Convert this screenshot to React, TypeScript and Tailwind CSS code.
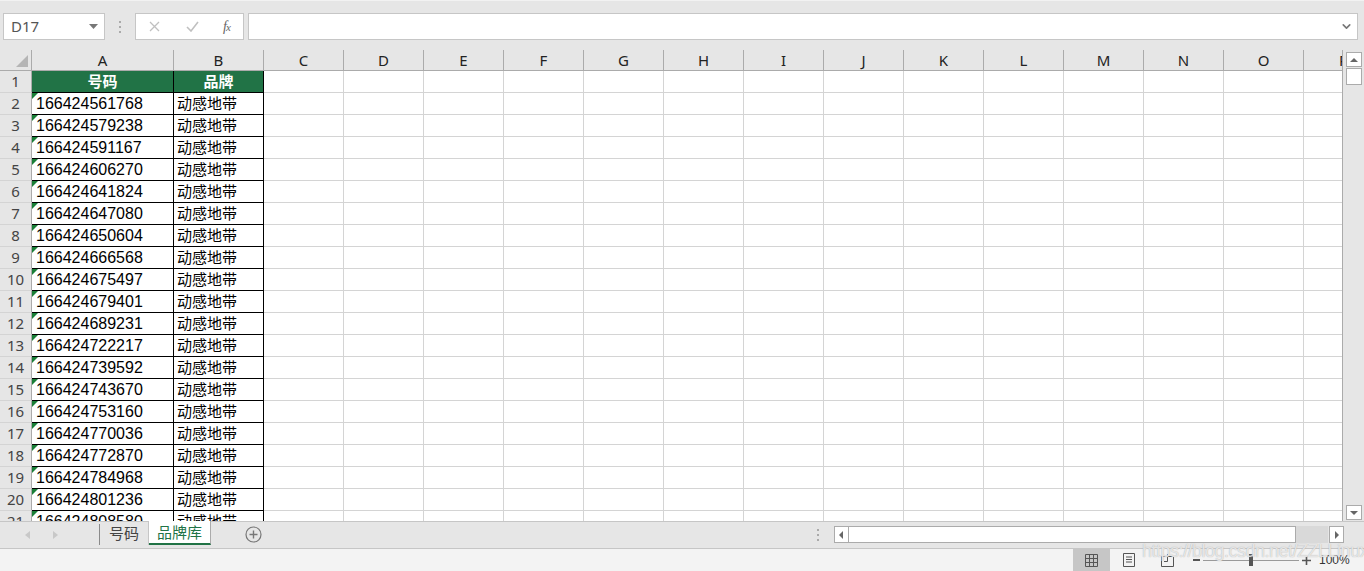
import { ChevronDown } from "lucide-react";

const cols = ["C", "D", "E", "F", "G", "H", "I", "J", "K", "L", "M", "N", "O", "P"];

const numbers = [
  "166424561768",
  "166424579238",
  "166424591167",
  "166424606270",
  "166424641824",
  "166424647080",
  "166424650604",
  "166424666568",
  "166424675497",
  "166424679401",
  "166424689231",
  "166424722217",
  "166424739592",
  "166424743670",
  "166424753160",
  "166424770036",
  "166424772870",
  "166424784968",
  "166424801236",
  "166424808580",
];

function RowHead({ n }: { n: number }) {
  return (
    <div className="w-[32px] shrink-0 flex items-center justify-center bg-[#e6e6e6] border-r border-b border-r-[#ababab] border-b-[#d4d4d4] text-[15px] text-[#444]">
      {n}
    </div>
  );
}

function Blanks() {
  return (
    <>
      {cols.map((c) => (
        <div key={c} className="w-[80px] shrink-0 bg-white border-r border-b border-[#d4d4d4]" />
      ))}
    </>
  );
}

export default function App() {
  return (
    <div className="relative w-[1364px] h-[571px] overflow-hidden bg-[#e6e6e6] flex flex-col font-['Noto_Sans','Noto_Sans_CJK_SC',sans-serif]">
      {/* formula bar */}
      <div className="h-[50px] shrink-0 flex items-start pt-[12px] pl-[3px] border-t border-[#f2f2f2]">
        <div className="w-[102px] h-[27px] bg-white border border-[#c6c6c6] flex items-center justify-between pl-[7px] pr-[6px]">
          <span className="text-[15px] text-[#555]">D17</span>
          <svg width="9" height="5" viewBox="0 0 9 5">
            <path d="M0 0h9L4.5 5z" fill="#777" />
          </svg>
        </div>
        <div className="w-[30px] h-[27px] flex flex-col items-center justify-center gap-[3px]">
          <span className="w-[2px] h-[2px] bg-[#aaa]" />
          <span className="w-[2px] h-[2px] bg-[#aaa]" />
          <span className="w-[2px] h-[2px] bg-[#aaa]" />
        </div>
        <div className="w-[109px] h-[27px] bg-white border border-[#c6c6c6] flex items-center">
          <svg className="ml-[13px]" width="11" height="11" viewBox="0 0 11 11">
            <path d="M1 1l9 9M10 1l-9 9" stroke="#c0c0c0" strokeWidth="1.3" />
          </svg>
          <svg className="ml-[26px]" width="13" height="11" viewBox="0 0 13 11">
            <path d="M1 6l4 4 7-9" stroke="#c0c0c0" strokeWidth="1.6" fill="none" />
          </svg>
          <span className="ml-[24px] text-[14px] italic text-[#666] font-['Liberation_Serif',serif] tracking-[-1px]">
            f<span className="text-[11px]">x</span>
          </span>
        </div>
        <div className="ml-[4px] w-[1110px] h-[27px] bg-white border border-[#c6c6c6] flex items-center justify-end pr-[4px]">
          <ChevronDown size={13} strokeWidth={3} color="#777" />
        </div>
      </div>

      {/* grid + vertical scrollbar */}
      <div className="h-[471px] shrink-0 flex">
        <div className="w-[1343px] shrink-0 overflow-hidden flex flex-col border-r border-[#ababab]">
          {/* column headers */}
          <div className="h-[21px] shrink-0 flex text-[15px] text-[#222]">
            <div className="w-[32px] shrink-0 flex items-end justify-end pr-[3px] pb-[3px] border-r border-b border-[#ababab]">
              <svg width="12" height="12" viewBox="0 0 12 12">
                <path d="M12 0v12H0z" fill="#b5b5b5" />
              </svg>
            </div>
            <div className="w-[142px] shrink-0 flex items-center justify-center border-r border-b border-[#ababab]">A</div>
            <div className="w-[90px] shrink-0 flex items-center justify-center border-r border-b border-[#ababab]">B</div>
            {cols.map((c) => (
              <div key={c} className="w-[80px] shrink-0 flex items-center justify-center border-r border-b border-[#ababab]">
                {c}
              </div>
            ))}
          </div>

          {/* row 1 */}
          <div className="h-[22px] shrink-0 flex">
            <RowHead n={1} />
            <div className="w-[142px] shrink-0 bg-[#217346] border-r border-b border-black flex items-center justify-center text-white font-bold text-[15px]">
              号码
            </div>
            <div className="w-[90px] shrink-0 bg-[#217346] border-r border-b border-black flex items-center justify-center text-white font-bold text-[15px]">
              品牌
            </div>
            <Blanks />
          </div>

          {numbers.map((num, i) => (
            <div key={num} className="h-[22px] shrink-0 flex">
              <RowHead n={i + 2} />
              <div className="relative w-[142px] shrink-0 bg-white border-r border-b border-black flex items-center pl-[4px] text-[16px] text-black font-['Liberation_Sans',sans-serif]">
                <span className="absolute top-0 left-0 w-0 h-0 border-t-[6px] border-t-[#1a7f37] border-r-[6px] border-r-transparent" />
                {num}
              </div>
              <div className="w-[90px] shrink-0 bg-white border-r border-b border-black flex items-center pl-[3px] text-[15px] text-black">
                动感地带
              </div>
              <Blanks />
            </div>
          ))}
        </div>

        {/* vertical scrollbar */}
        <div className="w-[21px] shrink-0 flex flex-col items-center pt-[2px] pb-[1px]">
          <div className="w-[16px] h-[15px] bg-white border border-[#ababab] flex items-center justify-center">
            <svg width="8" height="4" viewBox="0 0 8 4">
              <path d="M0 4h8L4 0z" fill="#666" />
            </svg>
          </div>
          <div className="w-[16px] h-[17px] bg-white border border-[#ababab] mt-[1px]" />
          <div className="flex-1" />
          <div className="w-[16px] h-[15px] bg-white border border-[#ababab] flex items-center justify-center">
            <svg width="8" height="4" viewBox="0 0 8 4">
              <path d="M0 0h8L4 4z" fill="#666" />
            </svg>
          </div>
        </div>
      </div>

      {/* sheet tabs + horizontal scrollbar */}
      <div className="h-[27px] shrink-0 flex items-start border-t border-[#c6c6c6]">
        <div className="w-[99px] h-[25px] flex items-center">
          <svg className="ml-[25px]" width="5" height="8" viewBox="0 0 5 8">
            <path d="M5 0v8L0 4z" fill="#c8c8c8" />
          </svg>
          <svg className="ml-[23px]" width="5" height="8" viewBox="0 0 5 8">
            <path d="M0 0v8l5-4z" fill="#c8c8c8" />
          </svg>
        </div>
        <div className="w-[1px] h-[21px] mt-[2px] bg-[#8a8a8a]" />
        <div className="w-[49px] h-[23px] flex items-center justify-center text-[15px] text-[#444] border-r border-[#c6c6c6]">
          号码
        </div>
        <div className="w-[62px] h-[24px] -mt-[1px] bg-white flex items-center justify-center text-[15px] text-[#217346] border-r border-[#ababab] border-b-2 border-b-[#217346]">
          品牌库
        </div>
        <div className="w-[84px] h-[25px] flex items-center justify-center">
          <svg width="17" height="17" viewBox="0 0 17 17">
            <circle cx="8.5" cy="8.5" r="7.5" stroke="#777" strokeWidth="1.2" fill="none" />
            <path d="M8.5 4.5v8M4.5 8.5h8" stroke="#777" strokeWidth="1.4" />
          </svg>
        </div>
        <div className="w-[539px] h-[25px] flex items-center justify-end pr-[15px]">
          <div className="flex flex-col gap-[3px]">
            <span className="w-[2px] h-[2px] bg-[#aaa]" />
            <span className="w-[2px] h-[2px] bg-[#aaa]" />
            <span className="w-[2px] h-[2px] bg-[#aaa]" />
          </div>
        </div>
        <div className="w-[510px] h-[17px] mt-[4px] flex">
          <div className="w-[15px] h-[17px] bg-white border border-[#ababab] flex items-center justify-center">
            <svg width="4" height="8" viewBox="0 0 4 8">
              <path d="M4 0v8L0 4z" fill="#666" />
            </svg>
          </div>
          <div className="w-[448px] h-[17px] bg-white border border-l-0 border-[#ababab]" />
          <div className="w-[32px] h-[17px] bg-[#d9d9d9]" />
          <div className="w-[15px] h-[17px] ml-[1px] bg-white border border-[#ababab] flex items-center justify-center">
            <svg width="4" height="8" viewBox="0 0 4 8">
              <path d="M0 0v8l4-4z" fill="#666" />
            </svg>
          </div>
        </div>
      </div>

      {/* status bar */}
      <div className="h-[23px] shrink-0 bg-[#f3f3f3] border-t border-[#c6c6c6] flex items-stretch">
        <div className="w-[1073px] shrink-0" />
        <div className="w-[37px] shrink-0 bg-[#c6c6c6] flex items-center justify-center">
          <svg width="13" height="13" viewBox="0 0 13 13">
            <path d="M0.5 0.5h12v12h-12zM4.5 0.5v12M8.5 0.5v12M0.5 4.5h12M0.5 8.5h12" stroke="#555" fill="none" />
          </svg>
        </div>
        <div className="w-[38px] shrink-0 flex items-center justify-center">
          <svg width="12" height="14" viewBox="0 0 12 14">
            <path d="M0.5 0.5h11v13h-11z" stroke="#555" fill="none" />
            <path d="M3 4h6M3 6.5h6M3 9h6" stroke="#555" />
          </svg>
        </div>
        <div className="w-[38px] shrink-0 flex items-center justify-center">
          <svg width="13" height="13" viewBox="0 0 13 13">
            <path d="M0.5 2.5h12v10h-12z" stroke="#555" fill="none" />
            <path d="M6.5 0v7.5H3" stroke="#555" fill="none" />
          </svg>
        </div>
        <div className="flex items-center ml-[7px]">
          <span className="w-[7px] h-[2px] bg-[#555]" />
          <div className="relative w-[96px] h-[1px] bg-[#9a9a9a] mx-[3px]">
            <span className="absolute left-[46px] -top-[6px] w-[4px] h-[12px] bg-[#555]" />
          </div>
          <svg width="9" height="9" viewBox="0 0 9 9">
            <path d="M4.5 0v9M0 4.5h9" stroke="#555" strokeWidth="1.6" />
          </svg>
          <span className="ml-[8px] text-[12px] text-[#333] font-['Liberation_Sans',sans-serif]">100%</span>
        </div>
      </div>

      {/* watermark */}
      <span className="absolute left-[1142px] top-[538px] text-[18px] tracking-[-0.5px] text-white/70 font-['Liberation_Sans',sans-serif] [text-shadow:0_0_1px_#a0a0a0] pointer-events-none">
        https://blog.csdn.net/ZZLLinux
      </span>
    </div>
  );
}
